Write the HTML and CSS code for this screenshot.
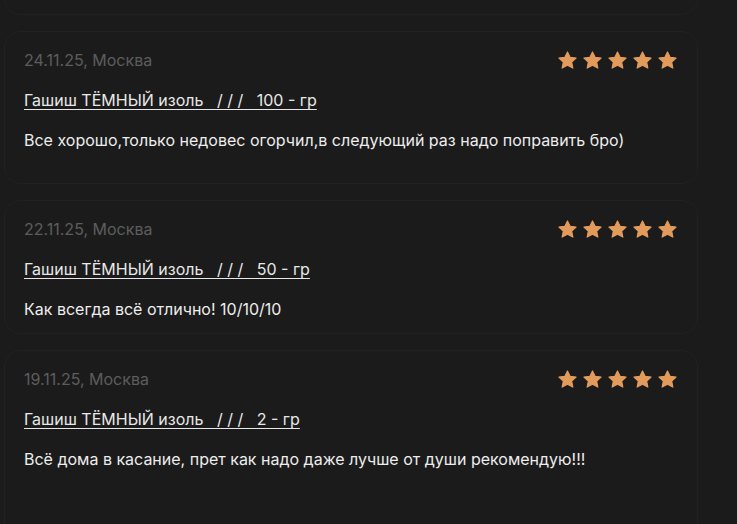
FILE: index.html
```html
<!DOCTYPE html>
<html lang="ru">
<head>
<meta charset="utf-8">
<title>Отзывы</title>
<link rel="stylesheet" href="styles.css">
</head>
<body>
<svg width="0" height="0" class="defs" aria-hidden="true">
  <symbol id="star" viewBox="0 0 24 24">
    <path d="M12 2.2l3 6.2 6.8.85-5 4.7 1.3 6.75L12 17.4l-6.1 3.3 1.3-6.75-5-4.7 6.8-.85z" fill="currentColor" stroke="currentColor" stroke-width="1.3" stroke-linejoin="round"/>
  </symbol>
</svg>
<main class="feed">
  <article class="card card--prev"></article>

  <article class="card card--tall">
    <div class="card__head">
      <span class="card__date">24.11.25, Москва</span>
      <div class="stars">
        <svg class="star"><use href="#star"/></svg>
        <svg class="star"><use href="#star"/></svg>
        <svg class="star"><use href="#star"/></svg>
        <svg class="star"><use href="#star"/></svg>
        <svg class="star"><use href="#star"/></svg>
      </div>
    </div>
    <a class="card__product" href="#">Гашиш ТЁМНЫЙ изоль   / / /   100 - гр</a>
    <p class="card__text">Все хорошо,только недовес огорчил,в следующий раз надо поправить бро)</p>
  </article>

  <article class="card">
    <div class="card__head">
      <span class="card__date">22.11.25, Москва</span>
      <div class="stars">
        <svg class="star"><use href="#star"/></svg>
        <svg class="star"><use href="#star"/></svg>
        <svg class="star"><use href="#star"/></svg>
        <svg class="star"><use href="#star"/></svg>
        <svg class="star"><use href="#star"/></svg>
      </div>
    </div>
    <a class="card__product" href="#">Гашиш ТЁМНЫЙ изоль   / / /   50 - гр</a>
    <p class="card__text">Как всегда всё отлично! 10/10/10</p>
  </article>

  <article class="card card--last">
    <div class="card__head">
      <span class="card__date">19.11.25, Москва</span>
      <div class="stars">
        <svg class="star"><use href="#star"/></svg>
        <svg class="star"><use href="#star"/></svg>
        <svg class="star"><use href="#star"/></svg>
        <svg class="star"><use href="#star"/></svg>
        <svg class="star"><use href="#star"/></svg>
      </div>
    </div>
    <a class="card__product" href="#">Гашиш ТЁМНЫЙ изоль   / / /   2 - гр</a>
    <p class="card__text">Всё дома в касание, прет как надо даже лучше от души рекомендую!!!</p>
  </article>
</main>
</body>
</html>
```

FILE: styles.css
```css
html, body {
  margin: 0;
  padding: 0;
  background: #1b1b1b;
  height: 100%;
  overflow: hidden;
}

body {
  font-family: Inter, "Noto Sans", sans-serif;
  font-size: 16px;
  color: #ececec;
}

.defs {
  position: absolute;
}

.feed {
  display: flex;
  flex-direction: column;
  gap: 16px;
  width: 694px;
  padding-left: 4px;
  margin-top: -85px;
}

.card {
  box-sizing: border-box;
  background: #1b1b1b;
  border: 1px solid #212121;
  border-radius: 16px;
  padding: 17px 19px 13px 19px;
  display: flex;
  flex-direction: column;
}

.card--prev {
  height: 100px;
}

.card--tall {
  padding-bottom: 32px;
}

.card--last {
  min-height: 260px;
}

.card__head {
  display: flex;
  align-items: center;
  justify-content: space-between;
  height: 22px;
}

.card__date {
  color: #5d5d5d;
  line-height: 22px;
}

.stars {
  display: flex;
  gap: 4px;
}

.star {
  width: 21px;
  height: 21px;
  color: #e39b5c;
}

.card__product {
  align-self: flex-start;
  margin-top: 18px;
  line-height: 22px;
  color: #e8e8e8;
  text-decoration: underline;
  text-underline-offset: 3px;
  text-decoration-thickness: 1px;
  white-space: pre;
}

.card__text {
  margin: 18px 0 0;
  line-height: 22px;
  color: #ededed;
}
```
